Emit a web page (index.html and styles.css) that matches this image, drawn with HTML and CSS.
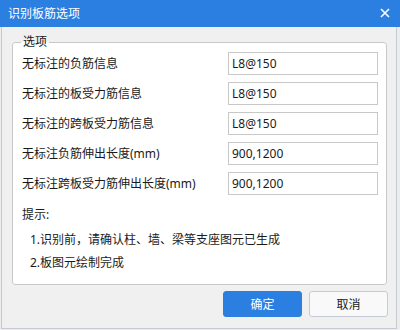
FILE: index.html
```html
<!DOCTYPE html>
<html lang="zh-CN">
<head>
<meta charset="utf-8">
<link rel="stylesheet" href="styles.css">
</head>
<body>
<div class="dialog">
  <div class="titlebar">
    <span class="title">识别板筋选项</span>
    <svg class="close" width="10" height="10" viewBox="0 0 10 10"><path d="M1 1L9 9M9 1L1 9" stroke="#fff" stroke-width="1.6" fill="none"/></svg>
  </div>
  <div class="content">
    <fieldset class="group">
      <legend>选项</legend>
      <div class="rows">
        <div class="row"><span class="label">无标注的负筋信息</span><input class="field" value="L8@150"></div>
        <div class="row"><span class="label">无标注的板受力筋信息</span><input class="field" value="L8@150"></div>
        <div class="row"><span class="label">无标注的跨板受力筋信息</span><input class="field" value="L8@150"></div>
        <div class="row"><span class="label">无标注负筋伸出长度(mm)</span><input class="field" value="900,1200"></div>
        <div class="row"><span class="label">无标注跨板受力筋伸出长度(mm)</span><input class="field" value="900,1200"></div>
      </div>
      <div class="tip">提示:</div>
      <div class="tips">
        <div class="tipline">1.识别前，请确认柱、墙、梁等支座图元已生成</div>
        <div class="tipline">2.板图元绘制完成</div>
      </div>
    </fieldset>
    <div class="buttons">
      <button class="btn primary">确定</button>
      <button class="btn">取消</button>
    </div>
  </div>
</div>
</body>
</html>
```
FILE: styles.css
```css
html, body {
  margin: 0;
  padding: 0;
  background: #ececec;
  font-family: "Noto Sans", "Noto Sans CJK SC", sans-serif;
  font-size: 12px;
  color: #1a1a1a;
}
.dialog {
  width: 400px;
  height: 330px;
  display: flex;
  flex-direction: column;
}
.titlebar {
  height: 27px;
  background: #2b7fe0;
  display: flex;
  align-items: center;
  justify-content: space-between;
  padding: 0 10px 0 8px;
  box-sizing: border-box;
}
.title {
  color: #fff;
  font-size: 12px;
  line-height: 16px;
}
.close { display: block; margin-top: -1px; }
.content {
  flex: 1;
  margin: 0 3px 1px 1px;
  border: 1px solid #c6cad2;
  border-top: none;
  background: #f0f0f0;
  display: flex;
  flex-direction: column;
}
.group {
  margin: 7px 9px 0 10px;
  padding: 2px 8px 13px 9px;
  border: 1px solid #c8c8c8;
  border-radius: 3px;
  background: #fff;
  min-width: 0;
}
.group legend {
  padding: 0 2px;
  line-height: 16px;
  font-size: 12px;
  margin-left: -1px;
}
.rows {
  display: flex;
  flex-direction: column;
  gap: 7px;
}
.row {
  display: flex;
  align-items: center;
  justify-content: space-between;
  height: 23px;
}
.label { line-height: 16px; }
.field {
  width: 150px;
  height: 23px;
  box-sizing: border-box;
  border: 1px solid #c8c8c8;
  padding: 0 3px;
  font-family: "Noto Sans", "Noto Sans CJK SC", sans-serif;
  font-size: 12px;
  color: #1a1a1a;
  outline: none;
  background: #fff;
  margin: 0;
}
.tip {
  margin-top: 12px;
  line-height: 16px;
}
.tips {
  margin-top: 9px;
  padding-left: 8px;
  display: flex;
  flex-direction: column;
  gap: 7px;
}
.tipline { line-height: 16px; }
.buttons {
  display: flex;
  justify-content: flex-end;
  gap: 7px;
  padding: 6px 8px 0 0;
}
.btn {
  width: 79px;
  height: 26px;
  box-sizing: border-box;
  border: 1px solid #c4cad6;
  border-radius: 3px;
  background: #f9f9f9;
  font-family: "Noto Sans", "Noto Sans CJK SC", sans-serif;
  font-size: 12px;
  color: #1a1a1a;
  padding: 0;
}
.btn.primary {
  background: #2b7fe0;
  border-color: #2b7fe0;
  color: #fff;
}
```
